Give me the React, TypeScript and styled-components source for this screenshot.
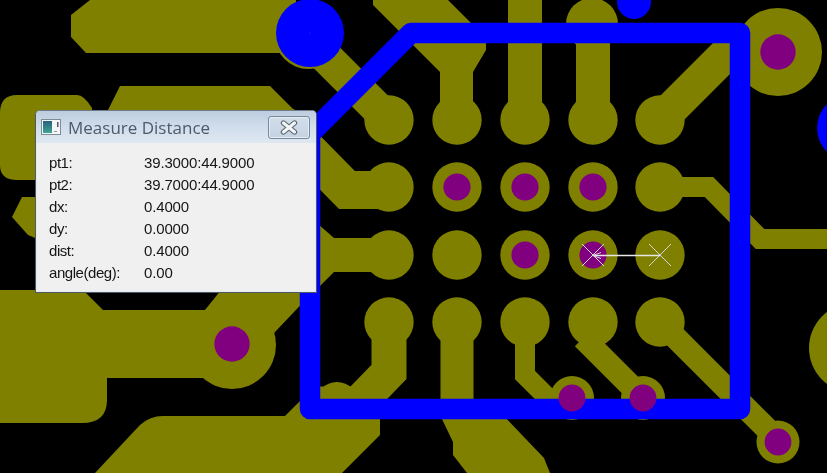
import React from "react";
import styled, { createGlobalStyle } from "styled-components";

const Global = createGlobalStyle`
  html, body { margin: 0; padding: 0; background: #000; }
  #root { width: 827px; height: 473px; overflow: hidden; }
`;

const Viewport = styled.main`
  position: relative;
  width: 827px;
  height: 473px;
  overflow: hidden;
  background: #000;
`;

const Board = styled.svg`
  display: block;
  width: 827px;
  height: 473px;
  filter: blur(0.35px);
`;

const Dialog = styled.section`
  position: absolute;
  left: 35px;
  top: 110px;
  width: 282px;
  height: 183px;
  box-sizing: border-box;
  display: flex;
  flex-direction: column;
  background: #f0f0f0;
  border: 1px solid #4e5a63;
  border-top-color: #6f7c88;
  border-radius: 5px 5px 0 0;
  box-shadow: inset 0 0 0 1px #e4ebf2;
`;

const TitleBar = styled.header`
  flex: 0 0 32px;
  display: flex;
  align-items: center;
  padding: 0 6px 0 5px;
  background: linear-gradient(180deg, #bccddf 0%, #cfdcea 45%, #dfe8f2 100%);
  border-radius: 4px 4px 0 0;
`;

const Title = styled.h1`
  flex: 1;
  margin: 0 0 0 7px;
  font: 400 17px "Open Sans", "Noto Sans", sans-serif;
  letter-spacing: 0;
  color: #4c5a6b;
  filter: blur(0.25px);
`;

const CloseButton = styled.button`
  width: 42px;
  height: 23px;
  padding: 0;
  display: flex;
  align-items: center;
  justify-content: center;
  border: 1px solid #76889c;
  border-radius: 3px;
  background: linear-gradient(180deg, #d3deea 0%, #c4d2e1 100%);
  box-shadow: inset 0 0 0 1px #e6edf5;
`;

const Readout = styled.dl`
  margin: 0;
  padding: 8px 0 0 13px;
  display: grid;
  grid-template-columns: 95px 1fr;
  grid-auto-rows: 22px;
  align-items: center;
  font: 400 15px "Liberation Sans", Arial, sans-serif;
  color: #151515;
  filter: blur(0.25px);
`;

const Label = styled.dt`
  letter-spacing: -0.45px;
`;

const Value = styled.dd`
  margin: 0;
  letter-spacing: -0.15px;
`;

const OL = "#808000";
const PU = "#800080";
const BL = "#0000ff";

const readings: [string, string][] = [
  ["pt1:", "39.3000:44.9000"],
  ["pt2:", "39.7000:44.9000"],
  ["dx:", "0.4000"],
  ["dy:", "0.0000"],
  ["dist:", "0.4000"],
  ["angle(deg):", "0.00"],
];

const gridX = [389, 457, 525, 593, 660];
const gridY = [120, 187, 255, 322];
const viasOnGrid: [number, number][] = [
  [457, 187],
  [525, 187],
  [593, 187],
  [525, 255],
  [593, 255],
];

const shapes = [
  "M71 15 L90 0 L296 0 L296 53 L86 53 L71 37 Z",
  "M107 112 L120 86 L270 86 L296 112 Z",
  "M0 113 Q0 95 17 95 L77 95 Q84 95 92 108 L92 180 L17 180 Q0 180 0 165 Z",
  "M12 217 L22 197 L40 197 L40 240 L28 235 Z",
  "M0 290 L83 290 L103 310 L205 310 L225 285 L312 285 L312 293 L275 332 L250 378 L107 378 L107 400 Q107 423 82 423 L0 423 Z",
  "M95 473 L140 425 Q150 416 163 416 L285 416 L305 396 L380 396 L380 435 L342 473 Z",
  "M373 0 L448 0 L486 38 L486 50 L473 72 L473 120 L440 120 L440 72 L373 5 Z",
  "M318 224 L334 238 L334 272 L318 288 Z",
  "M440 415 L503 415 L544 458 L550 473 L467 473 L453 455 L453 442 Z",
];

const traces: { d: string; w: number }[] = [
  { d: "M309 40 L389 120", w: 33 },
  { d: "M525 0 L525 120", w: 34 },
  { d: "M593 30 L593 120", w: 34 },
  { d: "M660 120 L735 45", w: 34 },
  { d: "M280 122 L347 190 L389 190", w: 38 },
  { d: "M389 255 L326 255 L240 341", w: 34 },
  { d: "M389 322 L389 372 L358 404 L320 404", w: 35 },
  { d: "M457 322 L457 405", w: 33 },
  { d: "M525 322 L525 375 L557 407", w: 20 },
  { d: "M583 338 L643 398", w: 23 },
  { d: "M660 322 L778 440", w: 23 },
  { d: "M660 187 L709 187 L760 239 L827 239", w: 20 },
];

const Cross = ({ x, y }: { x: number; y: number }) => (
  <path
    d={`M${x - 11} ${y - 11} L${x + 11} ${y + 11} M${x + 11} ${y - 11} L${x - 11} ${y + 11}`}
    stroke="#d5d8d8"
    strokeWidth="1"
    fill="none"
  />
);

const WindowIcon = () => (
  <svg width="20" height="16" viewBox="0 0 20 16" aria-hidden="true">
    <rect x="0.5" y="0.5" width="19" height="15" fill="#f4f6f8" stroke="#7f8c98" />
    <rect x="2" y="2" width="9" height="12" fill="url(#tile)" />
    <rect x="16" y="3" width="1.5" height="5" fill="#4a5a6a" />
    <rect x="13" y="12" width="3" height="1" fill="#8a98a6" />
    <defs>
      <linearGradient id="tile" x1="0" y1="0" x2="0" y2="1">
        <stop offset="0" stopColor="#27607e" />
        <stop offset="1" stopColor="#3fa594" />
      </linearGradient>
    </defs>
  </svg>
);

const CloseGlyph = () => (
  <svg width="18" height="15" viewBox="0 0 18 15" aria-hidden="true">
    <path d="M3.5 3 L14.5 12 M14.5 3 L3.5 12" stroke="#5a6672" strokeWidth="5.4" strokeLinecap="round" />
    <path d="M3.5 3 L14.5 12 M14.5 3 L3.5 12" stroke="#f2f4f6" strokeWidth="3.2" strokeLinecap="round" />
  </svg>
);

export default function App() {
  return (
    <Viewport>
      <Global />
      <Board viewBox="0 0 827 473" aria-label="PCB layout">
        <g fill={OL}>
          {shapes.map((p) => (
            <path key={p} d={p} />
          ))}
        </g>
        <g fill="none" stroke={OL} strokeLinejoin="miter">
          {traces.map((t) => (
            <path key={t.d} d={t.d} strokeWidth={t.w} />
          ))}
        </g>
        <g fill={OL}>
          {gridY.flatMap((y) =>
            gridX.map((x) => <circle key={`${x}-${y}`} cx={x} cy={y} r={24.7} />)
          )}
          <circle cx={308.5} cy={35} r={34} />
          <circle cx={592} cy={24} r={26} />
          <circle cx={778} cy={52} r={44} />
          <circle cx={232} cy={345} r={44} />
          <circle cx={337} cy={404} r={22} />
          <circle cx={572} cy={398} r={22} />
          <circle cx={643} cy={398} r={22} />
          <circle cx={778} cy={442} r={21.5} />
          <circle cx={854} cy={348} r={45} />
        </g>
        <path
          d="M310 409 L310 134 L411 33 L740 33 L740 409 Z"
          fill="none"
          stroke={BL}
          strokeWidth="20.5"
          strokeLinejoin="round"
        />
        <g fill={BL}>
          <circle cx={310} cy={33} r={34} />
          <circle cx={634} cy={2} r={17} />
          <circle cx={851} cy={128} r={34} />
        </g>
        <circle cx={310} cy={33} r={0.6} fill="#3a3aff" />
        <g fill={PU}>
          {viasOnGrid.map(([x, y]) => (
            <circle key={`${x}-${y}`} cx={x} cy={y} r={13.6} />
          ))}
          <circle cx={778} cy={52} r={17.7} />
          <circle cx={232} cy={344} r={17.7} />
          <circle cx={572} cy={398} r={13.4} />
          <circle cx={643} cy={398} r={13.4} />
          <circle cx={778} cy={442} r={13.4} />
        </g>
        <Cross x={593} y={255} />
        <Cross x={660} y={255} />
        <path d="M593 255.5 L660 255.5" stroke="#e6e8e8" strokeWidth="1.3" />
        <path d="M593 255.5 L601 252.5 M593 255.5 L601 258.5" stroke="#d5d8d8" strokeWidth="1" />
      </Board>
      <Dialog>
        <TitleBar>
          <WindowIcon />
          <Title>Measure Distance</Title>
          <CloseButton aria-label="Close">
            <CloseGlyph />
          </CloseButton>
        </TitleBar>
        <Readout>
          {readings.map(([k, v]) => (
            <React.Fragment key={k}>
              <Label>{k}</Label>
              <Value>{v}</Value>
            </React.Fragment>
          ))}
        </Readout>
      </Dialog>
    </Viewport>
  );
}
